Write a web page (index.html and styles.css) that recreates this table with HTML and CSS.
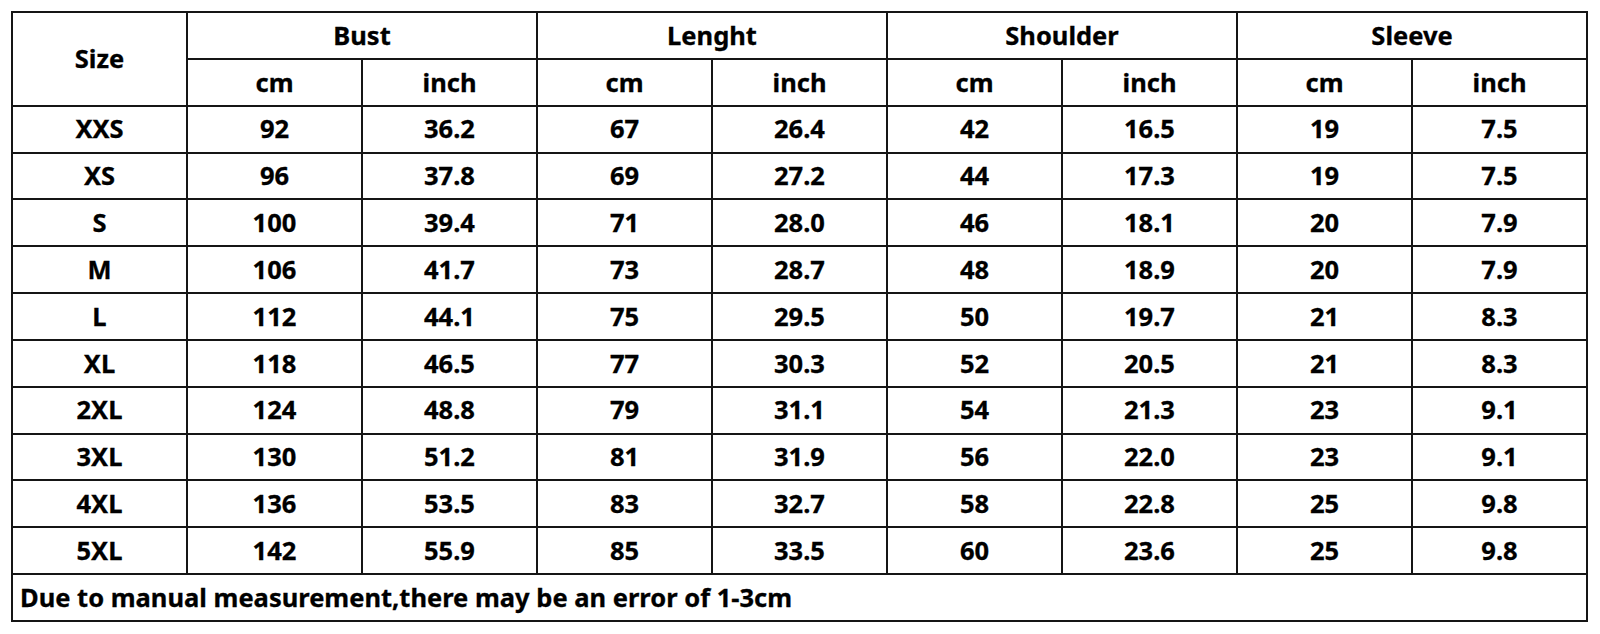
FILE: index.html
```html
<!DOCTYPE html>
<html>
<head>
<meta charset="utf-8">
<link rel="stylesheet" href="styles.css">
</head>
<body>
<table class="size-table">
  <colgroup>
    <col class="c"><col class="c"><col class="c"><col class="c"><col class="c"><col class="c"><col class="c"><col class="c"><col class="c">
  </colgroup>
  <thead>
    <tr><th rowspan="2">Size</th><th colspan="2">Bust</th><th colspan="2">Lenght</th><th colspan="2">Shoulder</th><th colspan="2">Sleeve</th></tr>
    <tr><th>cm</th><th>inch</th><th>cm</th><th>inch</th><th>cm</th><th>inch</th><th>cm</th><th>inch</th></tr>
  </thead>
  <tbody>
    <tr><td>XXS</td><td>92</td><td>36.2</td><td>67</td><td>26.4</td><td>42</td><td>16.5</td><td>19</td><td>7.5</td></tr>
    <tr><td>XS</td><td>96</td><td>37.8</td><td>69</td><td>27.2</td><td>44</td><td>17.3</td><td>19</td><td>7.5</td></tr>
    <tr><td>S</td><td>100</td><td>39.4</td><td>71</td><td>28.0</td><td>46</td><td>18.1</td><td>20</td><td>7.9</td></tr>
    <tr><td>M</td><td>106</td><td>41.7</td><td>73</td><td>28.7</td><td>48</td><td>18.9</td><td>20</td><td>7.9</td></tr>
    <tr><td>L</td><td>112</td><td>44.1</td><td>75</td><td>29.5</td><td>50</td><td>19.7</td><td>21</td><td>8.3</td></tr>
    <tr><td>XL</td><td>118</td><td>46.5</td><td>77</td><td>30.3</td><td>52</td><td>20.5</td><td>21</td><td>8.3</td></tr>
    <tr><td>2XL</td><td>124</td><td>48.8</td><td>79</td><td>31.1</td><td>54</td><td>21.3</td><td>23</td><td>9.1</td></tr>
    <tr><td>3XL</td><td>130</td><td>51.2</td><td>81</td><td>31.9</td><td>56</td><td>22.0</td><td>23</td><td>9.1</td></tr>
    <tr><td>4XL</td><td>136</td><td>53.5</td><td>83</td><td>32.7</td><td>58</td><td>22.8</td><td>25</td><td>9.8</td></tr>
    <tr><td>5XL</td><td>142</td><td>55.9</td><td>85</td><td>33.5</td><td>60</td><td>23.6</td><td>25</td><td>9.8</td></tr>
    <tr><td class="note" colspan="9">Due to manual measurement,there may be an error of 1-3cm</td></tr>
  </tbody>
</table>
</body>
</html>
```

FILE: styles.css
```css
html, body {
  margin: 0;
  padding: 0;
  background: #fff;
}
body {
  padding: 11px 0 0 11px;
}
.size-table {
  border-collapse: collapse;
  table-layout: fixed;
  width: 1577px;
  font-family: "Noto Sans", "Open Sans", sans-serif;
  font-weight: 700;
  font-size: 25.5px;
  color: #000;
  -webkit-text-stroke: 0.3px #000;
}
.size-table col.c {
  width: 175px;
}
.size-table th,
.size-table td {
  border: 2px solid #151515;
  height: 44.85px;
  padding: 0;
  text-align: center;
  vertical-align: middle;
  font-weight: 700;
  line-height: 1;
}
.size-table td.note {
  text-align: left;
  padding-left: 7px;
}
```
